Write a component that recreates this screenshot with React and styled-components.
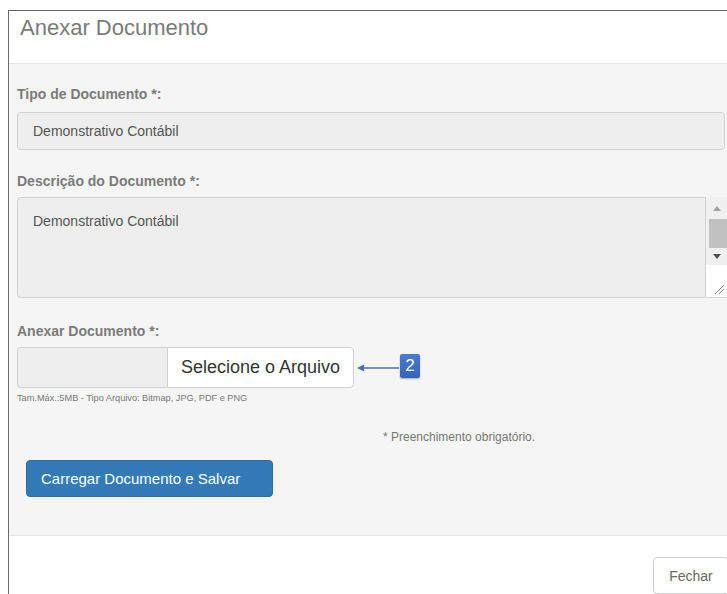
import React from 'react';
import styled, { createGlobalStyle } from 'styled-components';

const GlobalStyle = createGlobalStyle`
  html, body {
    margin: 0;
    padding: 0;
    background: #ffffff;
    overflow: hidden;
  }
  body {
    font-family: "Liberation Sans", Arial, sans-serif;
  }
`;

function App() {
  return (
    <>
      <GlobalStyle />
      <Pagina>
        <Modal>
          <Cabecalho>
            <Titulo>Anexar Documento</Titulo>
          </Cabecalho>

          <Corpo>
            <Rotulo>Tipo de Documento *:</Rotulo>
            <CampoTexto>Demonstrativo Contábil</CampoTexto>

            <Rotulo $topo={22}>Descrição do Documento *:</Rotulo>
            <AreaTexto>
              <AreaConteudo>Demonstrativo Contábil</AreaConteudo>
              <BarraRolagem>
                <SetaRolagem $altura={23}>
                  <svg width="8" height="5" viewBox="0 0 8 5">
                    <polygon points="0,5 4,0 8,5" fill="#a3a3a3" />
                  </svg>
                </SetaRolagem>
                <Polegar />
                <SetaRolagem $altura={17}>
                  <svg width="8" height="5" viewBox="0 0 8 5">
                    <polygon points="0,0 8,0 4,5" fill="#505050" />
                  </svg>
                </SetaRolagem>
                <Redimensionar>
                  <svg width="12" height="12" viewBox="0 0 12 12">
                    <line x1="11" y1="2" x2="2" y2="11" stroke="#8a8a8a" strokeWidth="1" />
                    <line x1="11" y1="6" x2="6" y2="11" stroke="#8a8a8a" strokeWidth="1" />
                  </svg>
                </Redimensionar>
              </BarraRolagem>
            </AreaTexto>

            <Rotulo $topo={24}>Anexar Documento *:</Rotulo>
            <LinhaArquivo>
              <CaminhoArquivo />
              <BotaoArquivo>Selecione o Arquivo</BotaoArquivo>
              <Seta width="44" height="12" viewBox="0 0 44 12">
                <line x1="6" y1="6" x2="43" y2="6" stroke="#4a6db3" strokeWidth="1.5" />
                <polygon points="1,6 8,2.5 8,9.5" fill="#4a6db3" />
              </Seta>
              <Marcador>2</Marcador>
            </LinhaArquivo>
            <Dica>Tam.Máx.:5MB - Tipo Arquivo: Bitmap, JPG, PDF e PNG</Dica>

            <Obrigatorio>* Preenchimento obrigatório.</Obrigatorio>

            <BotaoPrimario>Carregar Documento e Salvar</BotaoPrimario>
          </Corpo>

          <Rodape>
            <BotaoFechar>Fechar</BotaoFechar>
          </Rodape>
        </Modal>
      </Pagina>
    </>
  );
}

const Pagina = styled.div`
  padding: 10px 0 0 8px;
  width: 760px;
`;

const Modal = styled.div`
  width: 735px;
  border-top: 1px solid #6b6b6b;
  border-left: 1px solid #6b6b6b;
  background: #ffffff;
`;

const Cabecalho = styled.div`
  padding: 2px 11px 21px;
  border-bottom: 1px solid #e6e6e6;
`;

const Titulo = styled.h4`
  margin: 0;
  font-size: 22px;
  line-height: 29px;
  font-weight: normal;
  color: #7a7a7a;
`;

const Corpo = styled.div`
  background: #f5f5f5;
  padding: 21px 19px 38px 8px;
  display: flex;
  flex-direction: column;
  align-items: flex-start;
`;

const Rotulo = styled.label`
  margin-top: ${(props) => props.$topo || 0}px;
  font-size: 14px;
  line-height: 18px;
  font-weight: bold;
  color: #7b7b7b;
`;

const CampoTexto = styled.div`
  box-sizing: border-box;
  align-self: stretch;
  height: 38px;
  margin-top: 9px;
  padding: 0 15px;
  display: flex;
  align-items: center;
  background: #eeeeee;
  border: 1px solid #d2d2d2;
  border-radius: 4px;
  font-size: 14px;
  color: #555555;
`;

const AreaTexto = styled.div`
  align-self: stretch;
  height: 101px;
  margin-top: 7px;
  margin-right: -2px;
  display: flex;
`;

const AreaConteudo = styled.div`
  flex: 1;
  box-sizing: border-box;
  padding: 15px 15px;
  background: #eeeeee;
  border: 1px solid #d2d2d2;
  border-radius: 4px 0 0 4px;
  font-size: 14px;
  color: #555555;
`;

const BarraRolagem = styled.div`
  width: 21px;
  display: flex;
  flex-direction: column;
  background: #f0f0f0;
  border-bottom: 1px solid #d2d2d2;
`;

const SetaRolagem = styled.div`
  height: ${(props) => props.$altura}px;
  display: flex;
  align-items: center;
  justify-content: center;

  svg {
    display: block;
  }
`;

const Polegar = styled.div`
  margin-left: 3px;
  height: 30px;
  background: #c1c1c1;
`;

const Redimensionar = styled.div`
  margin-top: auto;
  height: 31px;
  background: #ffffff;
  display: flex;
  align-items: flex-end;
  justify-content: flex-end;
  padding: 0 2px 2px 0;
`;

const LinhaArquivo = styled.div`
  margin-top: 7px;
  display: flex;
  align-items: center;
`;

const CaminhoArquivo = styled.div`
  box-sizing: border-box;
  width: 150px;
  height: 41px;
  background: #eeeeee;
  border: 1px solid #d2d2d2;
  border-right: none;
  border-radius: 4px 0 0 4px;
`;

const BotaoArquivo = styled.div`
  box-sizing: border-box;
  height: 41px;
  width: 187px;
  display: flex;
  align-items: center;
  justify-content: center;
  background: #ffffff;
  border: 1px solid #d2d2d2;
  border-radius: 0 4px 4px 0;
  font-size: 18px;
  color: #333333;
`;

const Seta = styled.svg`
  margin-left: 2px;
  display: block;
`;

const Marcador = styled.div`
  width: 20px;
  height: 24px;
  margin-top: -4px;
  display: flex;
  align-items: center;
  justify-content: center;
  background: linear-gradient(#4a7bd0, #3563b8);
  border-radius: 2px;
  box-shadow: 0 1px 2px rgba(0, 0, 0, 0.3);
  color: #ffffff;
  font-size: 17px;
`;

const Dica = styled.div`
  margin-top: 3px;
  font-size: 9.2px;
  line-height: 14px;
  color: #777777;
`;

const Obrigatorio = styled.div`
  margin-top: 25px;
  margin-left: 366px;
  font-size: 12px;
  line-height: 14px;
  color: #777777;
`;

const BotaoPrimario = styled.button`
  box-sizing: border-box;
  margin: 16px 0 0 9px;
  width: 247px;
  height: 37px;
  padding: 0 14px;
  text-align: left;
  background: #337ab7;
  border: 1px solid #2e6da4;
  border-radius: 4px;
  color: #ffffff;
  font-family: "Liberation Sans", Arial, sans-serif;
  font-size: 15px;
`;

const Rodape = styled.div`
  border-top: 1px solid #e6e6e6;
  padding: 21px 15px 15px;
  display: flex;
  justify-content: flex-end;
`;

const BotaoFechar = styled.button`
  box-sizing: border-box;
  height: 37px;
  width: 76px;
  background: #ffffff;
  border: 1px solid #cccccc;
  border-radius: 4px;
  color: #666666;
  font-family: "Liberation Sans", Arial, sans-serif;
  font-size: 14px;
`;

export default App;
